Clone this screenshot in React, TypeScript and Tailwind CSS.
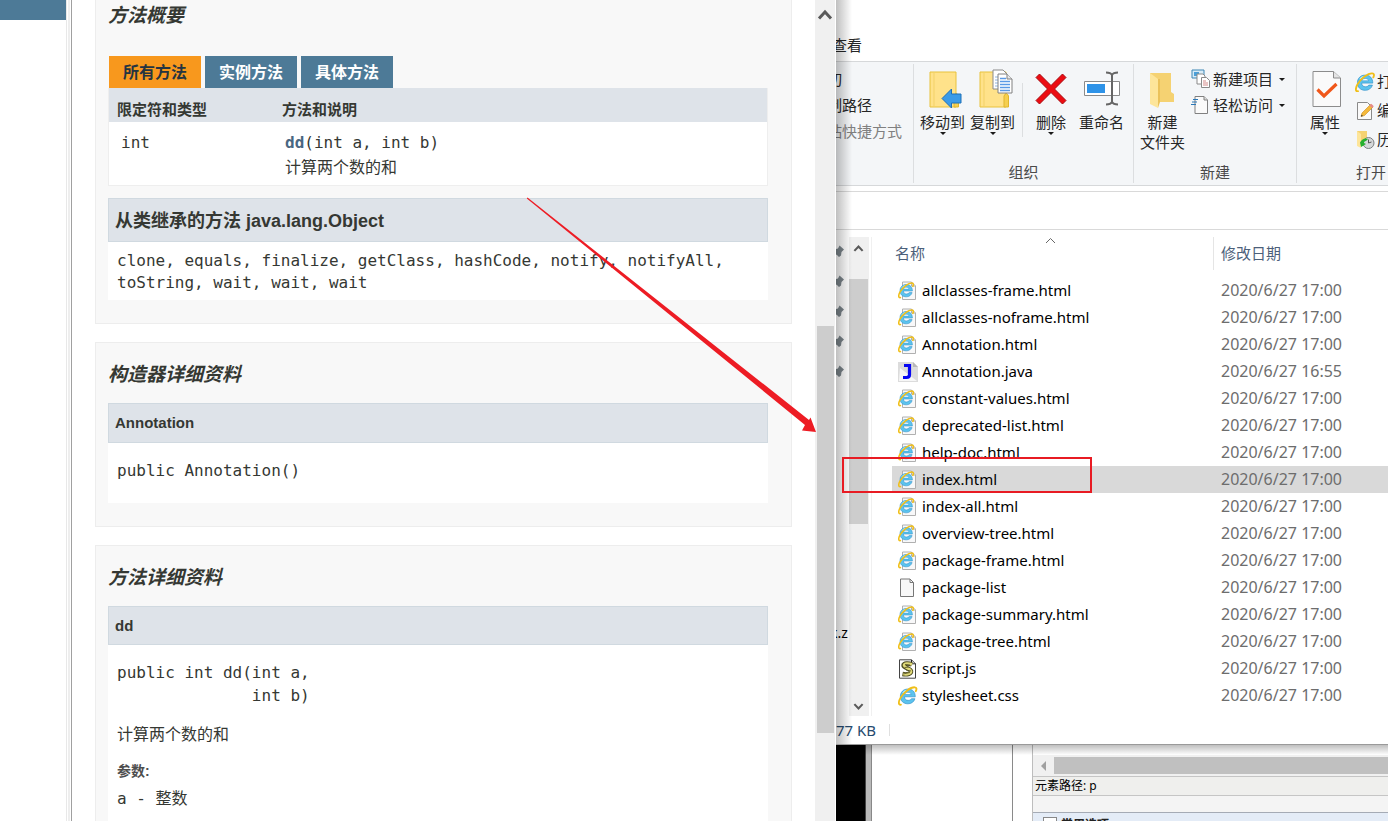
import React from "react";

const kids = (n: number) => Array.from({ length: n }, (_, i) => i);

function Chevron({ dir, size = 16 }: { dir: "up" | "down"; size?: number }) {
  return (
    <svg width={size} height={size} viewBox="0 0 16 16" fill="none" stroke="#5a5a5a" strokeWidth="3">
      <path d={dir === "up" ? "M2 11.5 8 5l6 6.5" : "M2 4.5 8 11l6-6.5"} />
    </svg>
  );
}

function Caret() {
  return (
    <svg width="6" height="3" viewBox="0 0 6 3" fill="#1a1a1a">
      <path d="M0 0h6L3 3z" />
    </svg>
  );
}

function BrowserGlyph() {
  return (
    <g fill="none">
      <path d="M16 10H6c.1 2.100 1.400 3.300 3.400 3.300 1.500 0 2.400-.5 3-1.500h3.300c-1 3-3.300 4.700-6.500 4.700-4.200 0-7-2.700-7-6.800 0-4 2.800-6.900 7-6.900 4.300 0 6.800 2.700 6.800 7.200z" fill="#5cc3ee" stroke="#2f8fc9" strokeWidth=".6" />
      <path d="M6.100 7.900h6.100c-.3-1.300-1.400-2-3-2-1.600 0-2.700.7-3.100 2z" fill="#fff" stroke="#2f8fc9" strokeWidth=".5" />
      <path d="M4.500 6.300c1-1.500 2.500-2.200 4.500-2.300" stroke="#c4eefc" strokeWidth="1.100" />
      <path d="M2.700 17.300C.3 17.900.2 14.600 2.300 11 5.300 5.800 11.600 1 15.500 1.200c1.900.1 1.900 1.700 1 3.600" stroke="#f0bf18" strokeWidth="1.700" strokeLinecap="round" />
    </g>
  );
}

function PageShape() {
  return (
    <>
      <path d="M4.500 1h9l4 4v13.500h-13z" fill="#f8f8f9" stroke="#b0b0b0" />
      <path d="M13.500 1v4h4" fill="#e6e6e6" stroke="#b0b0b0" />
    </>
  );
}

type Kind = "html" | "java" | "blank" | "js" | "css";

function FileIcon({ kind }: { kind: Kind }) {
  return (
    <svg width="20" height="20" viewBox="0 0 20 20" className="shrink-0">
      {kind === "html" && (
        <>
          <PageShape />
          <g transform="translate(0 1) scale(.9)"><BrowserGlyph /></g>
        </>
      )}
      {kind === "css" && <g transform="scale(1.080)"><BrowserGlyph /></g>}
      {kind === "blank" && (
        <>
          <path d="M2.500 1h9.500L15.500 4.500V18.500h-13z" fill="#f8f8f8" stroke="#777" />
          <path d="M12 1v3.500h3.500" fill="none" stroke="#777" />
        </>
      )}
      {kind === "java" && (
        <>
          <path d="M0 0h15l5 5v15H0z" fill="#dcdcdc" />
          <path d="M2 6 19 19H1z" fill="#f7f7f7" />
          <path d="M15 0v5h5z" fill="#b9b9b9" />
          <path d="M6 3.500h5.500v9.300c0 1.800-1.200 2.700-3 2.700H5" fill="none" stroke="#0707f2" strokeWidth="3.200" />
        </>
      )}
      {kind === "js" && (
        <>
          <path d="M1.500.8h12l4 4v14.400h-16z" fill="#fff" stroke="#444" />
          <path d="M13.500.8v4h4" fill="none" stroke="#222" />
          <path d="M14 5.500C11 4 5 4 5.500 6.500S12.500 9.500 13 12s-3.500 4-8.500 3" fill="none" stroke="#4c4a20" strokeWidth="4.400" />
          <path d="M14 5.500C11 4 5.500 4 6 6.500s6.500 3 7 5.500-3.500 4-8 3" fill="none" stroke="#e0d978" strokeWidth="2.600" />
          <path d="M7 5.500l5 .5M6.500 8.500l5-.5M8 11l5 1M5 15l7-1.500" stroke="#4c4a20" strokeWidth=".8" />
        </>
      )}
    </svg>
  );
}

const files: { name: string; date: string; kind: Kind }[] = [
  { name: "allclasses-frame.html", date: "2020/6/27 17:00", kind: "html" },
  { name: "allclasses-noframe.html", date: "2020/6/27 17:00", kind: "html" },
  { name: "Annotation.html", date: "2020/6/27 17:00", kind: "html" },
  { name: "Annotation.java", date: "2020/6/27 16:55", kind: "java" },
  { name: "constant-values.html", date: "2020/6/27 17:00", kind: "html" },
  { name: "deprecated-list.html", date: "2020/6/27 17:00", kind: "html" },
  { name: "help-doc.html", date: "2020/6/27 17:00", kind: "html" },
  { name: "index.html", date: "2020/6/27 17:00", kind: "html" },
  { name: "index-all.html", date: "2020/6/27 17:00", kind: "html" },
  { name: "overview-tree.html", date: "2020/6/27 17:00", kind: "html" },
  { name: "package-frame.html", date: "2020/6/27 17:00", kind: "html" },
  { name: "package-list", date: "2020/6/27 17:00", kind: "blank" },
  { name: "package-summary.html", date: "2020/6/27 17:00", kind: "html" },
  { name: "package-tree.html", date: "2020/6/27 17:00", kind: "html" },
  { name: "script.js", date: "2020/6/27 17:00", kind: "js" },
  { name: "stylesheet.css", date: "2020/6/27 17:00", kind: "css" },
];

function FolderBack() {
  return (
    <>
      <path d="M1 3h26v35H1z" fill="#ffe28a" stroke="#e8c23c" />
      <path d="M5 3v35" stroke="#f3d169" />
      <path d="M25 38V27q2.500-5 4.500 0v11z" fill="#f5cf50" stroke="#e0b62c" />
    </>
  );
}

function MoveIcon() {
  return (
    <svg width="40" height="40" viewBox="-6 0 40 40">
      <FolderBack />
      <path d="M13 29.500 22.500 20v5H32v9h-9.500v5z" fill="#3b9be8" stroke="#1f70b8" />
    </svg>
  );
}

function CopyIcon() {
  return (
    <svg width="40" height="40" viewBox="-6 0 40 40">
      <FolderBack />
      <path d="M14 1h10l4 4v15H14z" fill="#fff" stroke="#8b8b8b" />
      <path d="M16 8h4M16 11h4M16 14h4M16 17h4" stroke="#8fb4e0" />
      <path d="M19 5h9l5 5v14H19z" fill="#fff" stroke="#808080" />
      <path d="M28 5v5h5" fill="#e8e8e8" stroke="#808080" />
      <path d="M21 9.500h6M21 12.500h10M21 15.500h10M21 18.500h10M21 21.500h10" stroke="#5b9ae6" strokeWidth="1.300" />
    </svg>
  );
}

function DeleteIcon() {
  return (
    <svg width="32" height="40" viewBox="0 0 32 40">
      <path d="M4.500 5 16 16.500 27.500 5l3.500 3.500L19.500 20 31 31.500 27.500 35 16 23.500 4.500 35 1 31.500 12.500 20 1 8.500z" fill="#ec0c12" stroke="#a80a0f" />
    </svg>
  );
}

function RenameIcon() {
  return (
    <svg width="38" height="40" viewBox="0 0 38 40">
      <path d="M1.500 12.500h35v14h-35z" fill="#fff" stroke="#8a8a8a" />
      <path d="M4 15h18v9H4z" fill="#2e93e8" />
      <path d="M23 3.500c3 0 5 .5 6 2.500 1-2 3-2.500 6-2.500M29 5v29M23 35.500c3 0 5-.5 6-2.500 1 2 3 2.500 6 2.500" fill="none" stroke="#666" strokeWidth="2" />
    </svg>
  );
}

function NewFolderIcon() {
  return (
    <svg width="28" height="40" viewBox="0 0 28 40">
      <path d="M1 4h21v19l3 2v8H1z" fill="#f5d272" />
      <path d="M1 4l8 6v29l-8-4z" fill="#fde59a" />
      <path d="M9 10V39l2-6V10z" fill="#ebc25a" />
    </svg>
  );
}

function PropertiesIcon() {
  return (
    <svg width="34" height="40" viewBox="-4 0 34 40">
      <path d="M1 2.500h20.500L28.500 9v28.500H1z" fill="#fafafa" stroke="#8c8c8c" />
      <path d="M21.500 2.500V9h7" fill="#e4e4e4" stroke="#8c8c8c" />
      <path d="M5.500 20.500 12 27 24.500 15" fill="none" stroke="#f0571a" strokeWidth="3.200" />
    </svg>
  );
}

function NewItemIcon() {
  return (
    <svg width="20" height="20" viewBox="0 0 20 20">
      <path d="M1 1h12v8H1z" fill="#d8ecf8" stroke="#3c86b4" />
      <path d="M3 3h5v4H3z" fill="#4a9fd8" />
      <path d="M6 5h6l2 2v8H6z" fill="#fff" stroke="#8a8a8a" />
      <path d="M10.500 8.500h5l3 3v7h-8z" fill="#fff" stroke="#8a8a8a" />
      <path d="M12 12h3M12 14h5M12 16h5" stroke="#d48b8b" />
    </svg>
  );
}

function EasyAccessIcon() {
  return (
    <svg width="20" height="20" viewBox="0 0 20 20">
      <path d="M4 1.500h9l3.500 3.500v13.500H4z" fill="#fafafa" stroke="#808080" />
      <path d="M13 1.500V5h3.500" fill="#ddd" stroke="#808080" />
      <path d="M2 4.500h5M1 7h5M0 9.500h5" stroke="#2a78b8" strokeWidth="1.200" />
    </svg>
  );
}

function EditIcon() {
  return (
    <svg width="20" height="20" viewBox="0 0 20 20">
      <path d="M2.500 1.500h10l4 4v13h-14z" fill="#fafafa" stroke="#8a8a8a" />
      <path d="M6 15.500 7 12 15.500 3.500 18 6 9.500 14.500z" fill="#f5b93a" stroke="#c98c1c" strokeWidth=".6" />
      <path d="M14.500 4.500l1.800-1.800 2.500 2.500L17 7z" fill="#e58a8a" />
      <path d="M6 15.500l.5-1.800 1.500 1.400z" fill="#333" />
    </svg>
  );
}

function HistoryIcon() {
  return (
    <svg width="20" height="20" viewBox="0 0 20 20">
      <path d="M2 1h10v15H2z" fill="#f5d272" />
      <path d="M2 1l4 3v14l-4-2z" fill="#fde59a" />
      <circle cx="13.500" cy="13" r="5.500" fill="#d5d8da" stroke="#7b7f82" />
      <path d="M13.500 13V9.500M13.500 13l3-1" stroke="#555" />
      <path d="M5 12.500c2-3.500 5-5 8-3.500l-2 2c-1.500 0-2 1-2 2l2 1-5 3z" fill="#25b030" />
    </svg>
  );
}

function Pin() {
  return (
    <svg width="12" height="14" viewBox="0 0 12 14" fill="#7c868c">
      <path d="M7.500.5 12 4.500 9.500 7 9 10.500 7 12 4.500 9.500.5 13.500 3 8.500 1 6l1.500-1.500L6 3.500z" />
    </svg>
  );
}

function BigButton({ icon, label, caret = false }: { icon: React.ReactNode; label: React.ReactNode; caret?: boolean }) {
  return (
    <button type="button" className="flex shrink-0 flex-col items-center self-start pt-[3px] text-[15px] leading-5">
      <span className="flex h-10 items-center">{icon}</span>
      <span className="mt-[3px] whitespace-nowrap">{label}</span>
      {caret && <Caret />}
    </button>
  );
}

function RibbonGroup({ title, className, pad, children }: { title: string; className: string; pad: string; children: React.ReactNode }) {
  return (
    <section className={"flex shrink-0 flex-col justify-between " + className}>
      <div className={"flex pt-0.5 " + pad}>{children}</div>
      <h2 className="pb-px text-center text-[15px] leading-5 whitespace-nowrap text-[#4a4a4a]">{title}</h2>
    </section>
  );
}

function Divider() {
  return <div className="w-px shrink-0 self-stretch bg-[#dcdee0]" />;
}

function Explorer() {
  return (
    <section className="relative flex min-h-0 flex-1 flex-col overflow-hidden border-b border-[#9a9a9a] bg-white font-['Noto_Sans','Noto_Sans_CJK_SC',sans-serif] text-[15px] text-[#262626]">
      <nav className="flex h-[61px] shrink-0 items-end pb-1.5">
        <button type="button" className="-ml-1 text-[15px] leading-5">查看</button>
      </nav>

      <div className="flex h-[125px] shrink-0 overflow-hidden border-y border-[#d6d8da] bg-[#f4f6f8] py-0.5">
        <div className="flex w-[77px] shrink-0 flex-col pt-0.5">
          <button type="button" className="-ml-6 h-[26px] self-start whitespace-nowrap">剪切</button>
          <button type="button" className="-ml-6 h-[26px] self-start whitespace-nowrap">复制路径</button>
          <button type="button" className="-ml-6 h-[26px] self-start whitespace-nowrap text-[#808080]">粘贴快捷方式</button>
        </div>
        <Divider />
        <RibbonGroup title="组织" className="w-[219px]" pad="pl-1.5">
          <div className="flex gap-[5px]">
            <BigButton icon={<MoveIcon />} label="移动到" caret />
            <BigButton icon={<CopyIcon />} label="复制到" caret />
          </div>
          <div className="mt-[17px] ml-[7px] h-[54px] w-px bg-[#dcdee0]" />
          <div className="ml-3 flex gap-3">
            <BigButton icon={<DeleteIcon />} label="删除" caret />
            <BigButton icon={<RenameIcon />} label="重命名" />
          </div>
        </RibbonGroup>
        <Divider />
        <RibbonGroup title="新建" className="w-[162px]" pad="pl-1.5">
          <BigButton icon={<NewFolderIcon />} label={<>新建<br />文件夹</>} />
          <div className="ml-1.5 flex flex-col">
            <button type="button" className="flex h-[26px] items-center gap-0.5 whitespace-nowrap">
              <NewItemIcon /><span className="mr-1">新建项目</span><Caret />
            </button>
            <button type="button" className="flex h-[26px] items-center gap-0.5 whitespace-nowrap">
              <EasyAccessIcon /><span className="mr-1">轻松访问</span><Caret />
            </button>
          </div>
        </RibbonGroup>
        <Divider />
        <RibbonGroup title="打开" className="w-[148px]" pad="pl-[11px]">
          <BigButton icon={<PropertiesIcon />} label="属性" caret />
          <div className="ml-[13px] flex flex-col pt-px">
            <button type="button" className="flex h-[29px] items-center gap-0.5 whitespace-nowrap">
              <svg width="20" height="20" viewBox="0 0 18 18"><BrowserGlyph /></svg>打开
            </button>
            <button type="button" className="flex h-[29px] items-center gap-0.5 whitespace-nowrap"><EditIcon />编辑</button>
            <button type="button" className="flex h-[29px] items-center gap-0.5 whitespace-nowrap"><HistoryIcon />历史记录</button>
          </div>
        </RibbonGroup>
      </div>

      <div className="mt-[5px] h-[39px] shrink-0 border-y border-[#d9d9d9] bg-white" />

      <div className="flex min-h-0 flex-1 pt-[7px]">
        <div className="flex w-[13px] shrink-0 flex-col overflow-hidden">
          <div className="-ml-1 flex flex-col gap-4 pt-2">
            {kids(5).map((i) => <Pin key={i} />)}
          </div>
          <span className="mt-auto mb-[73px] -ml-1.5 text-[14px] leading-5 text-black">k.z</span>
        </div>
        <div className="flex w-5 shrink-0 flex-col items-center bg-[#f0f0f0] pr-px">
          <div className="flex h-[42px] items-start pt-1.5"><Chevron dir="up" size={11} /></div>
          <div className="h-[245px] w-full bg-[#cdcdcd]" />
          <div className="mt-auto pb-1"><Chevron dir="down" size={11} /></div>
        </div>
        <div className="ml-0.5 w-px shrink-0 bg-[#f0f0f0]" />
        <table className="ml-5 h-fit flex-1 table-fixed border-collapse text-left">
          <colgroup>
            <col className="w-[322px]" />
            <col />
          </colgroup>
          <thead>
            <tr className="h-10 align-top text-[#4c607a]">
              <th className="p-0 font-normal">
                <div className="relative flex h-[33px] items-center border-r border-[#e5e5e5] pl-[3px]">
                  名称
                  <svg className="absolute top-0 left-1/2 -ml-2" width="11" height="7" viewBox="0 0 11 7" fill="none" stroke="#666">
                    <path d="M1 6l4.500-4.500L10 6" />
                  </svg>
                </div>
              </th>
              <th className="p-0 font-normal"><div className="flex h-[33px] items-center pl-[7px]">修改日期</div></th>
            </tr>
          </thead>
          <tbody>
            {files.map((f) => (
              <tr key={f.name} className={f.name === "index.html" ? "h-[27px] bg-[#d9d9d9]" : "h-[27px]"}>
                <td className="p-0">
                  <span className="flex items-center gap-1 pl-1.5 leading-[27px] whitespace-nowrap text-black">
                    <FileIcon kind={f.kind} />
                    {f.name}
                  </span>
                </td>
                <td className="p-0 pl-[7px] text-[16px] leading-[27px] whitespace-nowrap text-[#6d6d6d]">{f.date}</td>
              </tr>
            ))}
          </tbody>
        </table>
      </div>

      <footer className="flex h-[28px] shrink-0 items-center text-[#264a6e]">
        <span className="w-[53px] whitespace-nowrap">77 KB</span>
        <span className="h-3 w-px bg-[#e0e0e0]" />
      </footer>

      <div className="pointer-events-none absolute inset-y-0 left-0 w-4 bg-linear-to-r from-black/25 to-transparent" />
    </section>
  );
}

function EditorBehind() {
  return (
    <section className="relative flex h-[76px] shrink-0 overflow-hidden bg-white font-['Noto_Sans','Noto_Sans_CJK_SC',sans-serif]">
      <div className="w-[29px] shrink-0 bg-black" />
      <div className="w-[7px] shrink-0 border-r border-l border-r-[#888] border-l-[#444] bg-[#b9b9b9]" />
      <div className="w-[140px] shrink-0 bg-white" />
      <div className="w-5 shrink-0 border-l border-[#8a8a8a]" />
      <div className="flex min-w-0 flex-1 flex-col border-l border-[#bdbdbd] bg-[#f4f4f4]">
        <div className="h-[10px] shrink-0 bg-white" />
        <div className="flex h-[21px] shrink-0 items-center bg-[#f0f0f0]">
          <svg className="mx-1.5 shrink-0" width="9" height="10" viewBox="0 0 9 10" fill="#a0a0a0"><path d="M7 0v10L2 5z" /></svg>
          <div className="h-[17px] flex-1 bg-[#c0c0c0]" />
        </div>
        <div className="flex h-5 shrink-0 items-center border-y border-[#c5c5c5] bg-[#efefed] pl-0.5 text-[12px] leading-4 text-black">元素路径: p</div>
        <div className="h-4 shrink-0" />
        <label className="flex h-6 shrink-0 items-start gap-1 border-t border-[#a5abb5] bg-[#e4ecf7] pt-1 pl-2.5 text-[12px] leading-4 font-bold text-[#222]">
          <input type="checkbox" className="size-3.5 shrink-0 appearance-none border border-[#888] bg-white" />
          <span>常用选项</span>
        </label>
      </div>
      <div className="pointer-events-none absolute inset-x-0 top-0 h-2.5 bg-linear-to-b from-black/25 to-transparent" />
    </section>
  );
}

function DocCard({ title, className, children }: { title: string; className: string; children: React.ReactNode }) {
  return (
    <section className={"border border-[#ededed] bg-[#f8f8f8] pr-[23px] pl-3 " + className}>
      <h2 className="text-[19px] leading-6 font-bold italic">{title}</h2>
      {children}
    </section>
  );
}

function DocFrame() {
  return (
    <section className="flex min-w-0 overflow-hidden bg-white font-['Liberation_Sans','Noto_Sans_CJK_SC',sans-serif] text-[#353833]">
      <div className="w-[66px] shrink-0">
        <div className="h-5 bg-[#4d7a97]" />
      </div>
      <div className="flex w-1.5 shrink-0 border-r border-l border-r-[#a0a0a0] border-l-[#e8e8e8] pl-px">
        <div className="w-0.5 bg-[#eeeeee]" />
      </div>
      <main className="flex min-w-0 flex-1 flex-col gap-[18px] overflow-hidden px-[23px]">
        <DocCard title="方法概要" className="border-t-0 pt-1 pb-[23px]">
          <div className="mt-7 flex gap-1 pl-px text-[16px] leading-[30px] font-bold text-white">
            <button type="button" className="bg-[#f8981d] px-3.5 pt-0.5 text-[#253441]">所有方法</button>
            <button type="button" className="bg-[#4d7a97] px-3.5 pt-0.5">实例方法</button>
            <button type="button" className="bg-[#4d7a97] px-3.5 pt-0.5">具体方法</button>
          </div>
          <table className="w-full border-separate border-spacing-0 border border-t-0 border-[#eee] bg-white text-left">
            <thead>
              <tr className="bg-[#dee3e9] text-[15px] leading-5">
                <th className="w-[165px] px-2 pt-3 pb-0.5">限定符和类型</th>
                <th className="px-2 pt-3 pb-0.5">方法和说明</th>
              </tr>
            </thead>
            <tbody>
              <tr className="align-top font-['DejaVu_Sans_Mono','Noto_Sans_CJK_SC',monospace] text-[16px] leading-[25px]">
                <td className="px-3 pt-2 pb-[5px]">int</td>
                <td className="px-[11px] pt-2 pb-[5px]">
                  <div><a href="#dd" className="font-bold text-[#4a6782]">dd</a>(int a, int b)</div>
                  <div>计算两个数的和</div>
                </td>
              </tr>
            </tbody>
          </table>
          <h3 className="mt-3 border border-[#d0d9e0] bg-[#dee3e9] px-1.5 pt-0.5 text-[18px] leading-10 font-bold">从类继承的方法 java.lang.Object</h3>
          <p className="bg-white px-[9px] pt-2 pb-1.5 font-['DejaVu_Sans_Mono',monospace] text-[16px] leading-[22px]">
            clone, equals, finalize, getClass, hashCode, notify, notifyAll, toString, wait, wait, wait
          </p>
        </DocCard>

        <DocCard title="构造器详细资料" className="pt-5 pb-[23px]">
          <h3 className="mt-4 border border-[#d0d9e0] bg-[#dee3e9] px-1.5 text-[15px] leading-[38px] font-bold">Annotation</h3>
          <pre className="bg-white px-[9px] pt-4 pb-[21px] font-['DejaVu_Sans_Mono',monospace] text-[16px] leading-[23px]">public Annotation()</pre>
        </DocCard>

        <DocCard title="方法详细资料" className="pt-5 pb-6">
          <h3 id="dd" className="mt-4 border border-[#d0d9e0] bg-[#dee3e9] px-1.5 text-[15px] leading-[37px] font-bold">dd</h3>
          <div className="bg-white px-[9px] pt-4 pb-8 font-['DejaVu_Sans_Mono','Noto_Sans_CJK_SC',monospace] text-[16px] leading-[23px]">
            <pre className="font-['DejaVu_Sans_Mono',monospace]">{"public int dd(int a,\n              int b)"}</pre>
            <p className="mt-4">计算两个数的和</p>
            <dl className="mt-3.5">
              <dt className="font-['Liberation_Sans','Noto_Sans_CJK_SC',sans-serif] text-[14px] font-bold text-[#4e4e4e]">参数:</dt>
              <dd className="mt-1">a - 整数</dd>
            </dl>
          </div>
        </DocCard>
      </main>
      <div className="flex w-[21px] shrink-0 flex-col items-center border-r border-white bg-[#f0f0f0]">
        <div className="flex h-[326px] shrink-0 items-start pt-[7px]"><Chevron dir="up" /></div>
        <div className="h-[407px] w-[17px] shrink-0 bg-[#cdcdcd]" />
      </div>
    </section>
  );
}

export default function App() {
  return (
    <div className="relative grid h-screen grid-cols-[836fr_552fr] overflow-hidden bg-white">
      <DocFrame />
      <div className="flex min-w-0 flex-col overflow-hidden">
        <Explorer />
        <EditorBehind />
      </div>
      <svg className="pointer-events-none absolute top-[197px] left-[526px]" width="292" height="238" viewBox="0 0 292 238" fill="#ed1c24">
        <path d="M1.500.5 283 223 284.500 220.500 290 235 276 233.500 279 228 .8 1.500z" />
      </svg>
      <div className="pointer-events-none absolute top-[457px] left-[842px] h-9 w-[250px] border-2 border-[#e81b23]" />
    </div>
  );
}
